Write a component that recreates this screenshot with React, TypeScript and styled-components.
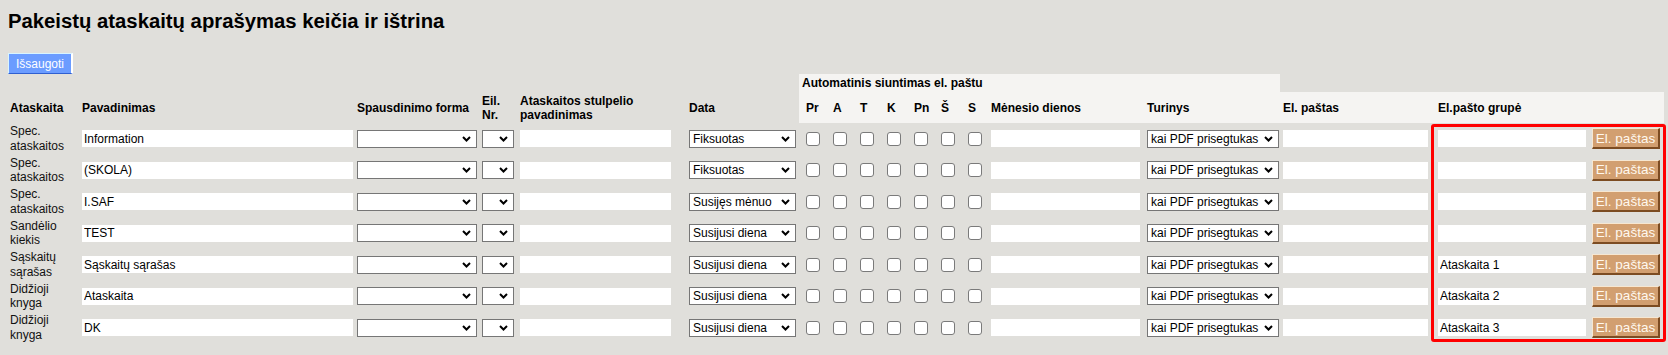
import React from "react";
import styled, { createGlobalStyle } from "styled-components";

const GlobalStyle = createGlobalStyle`
  html, body {
    margin: 0;
    padding: 0;
    background: #e0dfdb;
  }
  body {
    font-family: "Liberation Sans", Arial, sans-serif;
    color: #000;
    font-size: 12px;
  }
`;

const Page = styled.div`
  padding: 0 0 0 7px;
`;

const Title = styled.h1`
  margin: 10px 0 0 1px;
  font-size: 20.3px;
  line-height: 23px;
  font-weight: bold;
  color: #000;
`;

const Toolbar = styled.div`
  display: flex;
  margin-top: 20px;
  padding-left: 1px;
`;

const SaveButton = styled.button`
  height: 21px;
  padding: 0 7px;
  font-family: "Liberation Sans", Arial, sans-serif;
  font-size: 12px;
  color: #fff;
  background: #6b9cff;
  border-style: solid;
  border-width: 1px 2px 1px 1px;
  border-color: #d8f4ff #ffffff #2f5fd0 #d8f4ff;
  cursor: pointer;
`;

const Grid = styled.div`
  position: relative;
  display: grid;
  grid-template-columns: 72px 275px 125px 38px 169px 113px repeat(7, 27px) 156px 136px 155px 154px 75px;
  grid-template-rows: 18px 31px repeat(7, 31.5px);
  width: 1657px;
`;

const Spacer = styled.div<{ $from: number; $to: number }>`
  grid-row: 1;
  grid-column: ${(p) => p.$from} / ${(p) => p.$to};
`;

const GroupHead = styled.div`
  grid-column: 7 / 16;
  grid-row: 1;
  background: #f5f4f2;
  font-weight: bold;
  font-size: 12px;
  display: flex;
  align-items: center;
  padding-left: 3px;
  white-space: nowrap;
`;

const HeadCell = styled.div<{ $band?: boolean; $pad?: number }>`
  grid-row: 2;
  background: ${(p) => (p.$band ? "#f5f4f2" : "transparent")};
  font-weight: bold;
  font-size: 12px;
  line-height: 14px;
  display: flex;
  align-items: center;
  padding-left: ${(p) => p.$pad ?? 3}px;
  padding-right: 2px;
`;

const Cell = styled.div<{ $pad?: number }>`
  display: flex;
  align-items: center;
  padding-left: ${(p) => p.$pad ?? 3}px;
  min-width: 0;
`;

const Label = styled(Cell)`
  font-size: 12px;
  line-height: 14.5px;
  padding-right: 2px;
  color: #111;
`;

const TextInput = styled.input<{ $w: number }>`
  width: ${(p) => p.$w}px;
  height: 17px;
  box-sizing: border-box;
  border: none;
  background: #fff;
  padding: 0 2px;
  margin: 0;
  font-family: "Liberation Sans", Arial, sans-serif;
  font-size: 12px;
  color: #000;
  outline: none;
`;

const SelectBox = styled.div<{ $w: number }>`
  position: relative;
  width: ${(p) => p.$w}px;
  height: 18px;
`;

const NativeSelect = styled.select`
  appearance: none;
  -webkit-appearance: none;
  width: 100%;
  height: 18px;
  box-sizing: border-box;
  border: 1px solid #767676;
  border-radius: 0;
  background: #fff;
  margin: 0;
  padding: 0 16px 0 3px;
  font-family: "Liberation Sans", Arial, sans-serif;
  font-size: 12px;
  line-height: 16px;
  color: #000;
`;

const Chevron = styled.svg`
  position: absolute;
  right: 6px;
  top: 6px;
  width: 9px;
  height: 6px;
  pointer-events: none;
`;

const Check = styled.input.attrs({ type: "checkbox" })`
  appearance: none;
  -webkit-appearance: none;
  width: 14px;
  height: 14px;
  margin: 0;
  box-sizing: border-box;
  border: 1px solid #7a7a7a;
  border-radius: 3px;
  background: #fff;
`;

const MailButton = styled.button`
  width: 68px;
  height: 21px;
  padding: 0;
  font-family: "Liberation Sans", Arial, sans-serif;
  font-size: 13.5px;
  color: #fff8ee;
  background: #d29f70;
  border-style: solid;
  border-width: 1px 2px 2px 1px;
  border-color: #f6e7d2 #7c4c22 #7c4c22 #f6e7d2;
  cursor: pointer;
`;

const Highlight = styled.div`
  position: absolute;
  grid-column: 17;
  grid-row: 3 / 10;
  top: 1px;
  bottom: 1.5px;
  left: -4px;
  right: -2px;
  border: 3px solid #ff0000;
  border-radius: 3px;
  z-index: 1;
  pointer-events: none;
`;

type Row = { type: string; name: string; date: string; group: string };

const rows: Row[] = [
  { type: "Spec. ataskaitos", name: "Information", date: "Fiksuotas", group: "" },
  { type: "Spec. ataskaitos", name: "(SKOLA)", date: "Fiksuotas", group: "" },
  { type: "Spec. ataskaitos", name: "I.SAF", date: "Susijęs mėnuo", group: "" },
  { type: "Sandėlio kiekis", name: "TEST", date: "Susijusi diena", group: "" },
  { type: "Sąskaitų sąrašas", name: "Sąskaitų sąrašas", date: "Susijusi diena", group: "Ataskaita 1" },
  { type: "Didžioji knyga", name: "Ataskaita", date: "Susijusi diena", group: "Ataskaita 2" },
  { type: "Didžioji knyga", name: "DK", date: "Susijusi diena", group: "Ataskaita 3" },
];

const days = ["Pr", "A", "T", "K", "Pn", "Š", "S"];

function Select({ w, value }: { w: number; value: string }) {
  return (
    <SelectBox $w={w}>
      <NativeSelect defaultValue={value}>
        <option value={value}>{value}</option>
      </NativeSelect>
      <Chevron viewBox="0 0 9 6">
        <polyline points="1,1 4.5,4.5 8,1" fill="none" stroke="#000" strokeWidth="2" />
      </Chevron>
    </SelectBox>
  );
}

export default function App() {
  return (
    <>
      <GlobalStyle />
      <Page>
        <Title>Pakeistų ataskaitų aprašymas keičia ir ištrina</Title>
        <Toolbar>
          <SaveButton>Išsaugoti</SaveButton>
        </Toolbar>
        <Grid>
          <Spacer $from={1} $to={7} />
          <GroupHead>Automatinis siuntimas el. paštu</GroupHead>
          <Spacer $from={16} $to={19} />

          <HeadCell>Ataskaita</HeadCell>
          <HeadCell>Pavadinimas</HeadCell>
          <HeadCell>Spausdinimo forma</HeadCell>
          <HeadCell>Eil. Nr.</HeadCell>
          <HeadCell>Ataskaitos stulpelio pavadinimas</HeadCell>
          <HeadCell>Data</HeadCell>
          {days.map((d) => (
            <HeadCell key={d} $band $pad={7}>
              {d}
            </HeadCell>
          ))}
          <HeadCell $band>Mėnesio dienos</HeadCell>
          <HeadCell $band>Turinys</HeadCell>
          <HeadCell $band>El. paštas</HeadCell>
          <HeadCell $band>El.pašto grupė</HeadCell>
          <HeadCell $band />

          {rows.map((r, i) => (
            <React.Fragment key={i}>
              <Label>{r.type}</Label>
              <Cell>
                <TextInput $w={271} defaultValue={r.name} />
              </Cell>
              <Cell>
                <Select w={120} value="" />
              </Cell>
              <Cell>
                <Select w={32} value="" />
              </Cell>
              <Cell>
                <TextInput $w={151} defaultValue="" />
              </Cell>
              <Cell>
                <Select w={107} value={r.date} />
              </Cell>
              {days.map((d) => (
                <Cell key={d} $pad={7}>
                  <Check />
                </Cell>
              ))}
              <Cell>
                <TextInput $w={149} defaultValue="" />
              </Cell>
              <Cell>
                <Select w={132} value="kai PDF prisegtukas" />
              </Cell>
              <Cell>
                <TextInput $w={145} defaultValue="" />
              </Cell>
              <Cell>
                <TextInput $w={148} defaultValue={r.group} />
              </Cell>
              <Cell>
                <MailButton>El. paštas</MailButton>
              </Cell>
            </React.Fragment>
          ))}
          <Highlight />
        </Grid>
      </Page>
    </>
  );
}
